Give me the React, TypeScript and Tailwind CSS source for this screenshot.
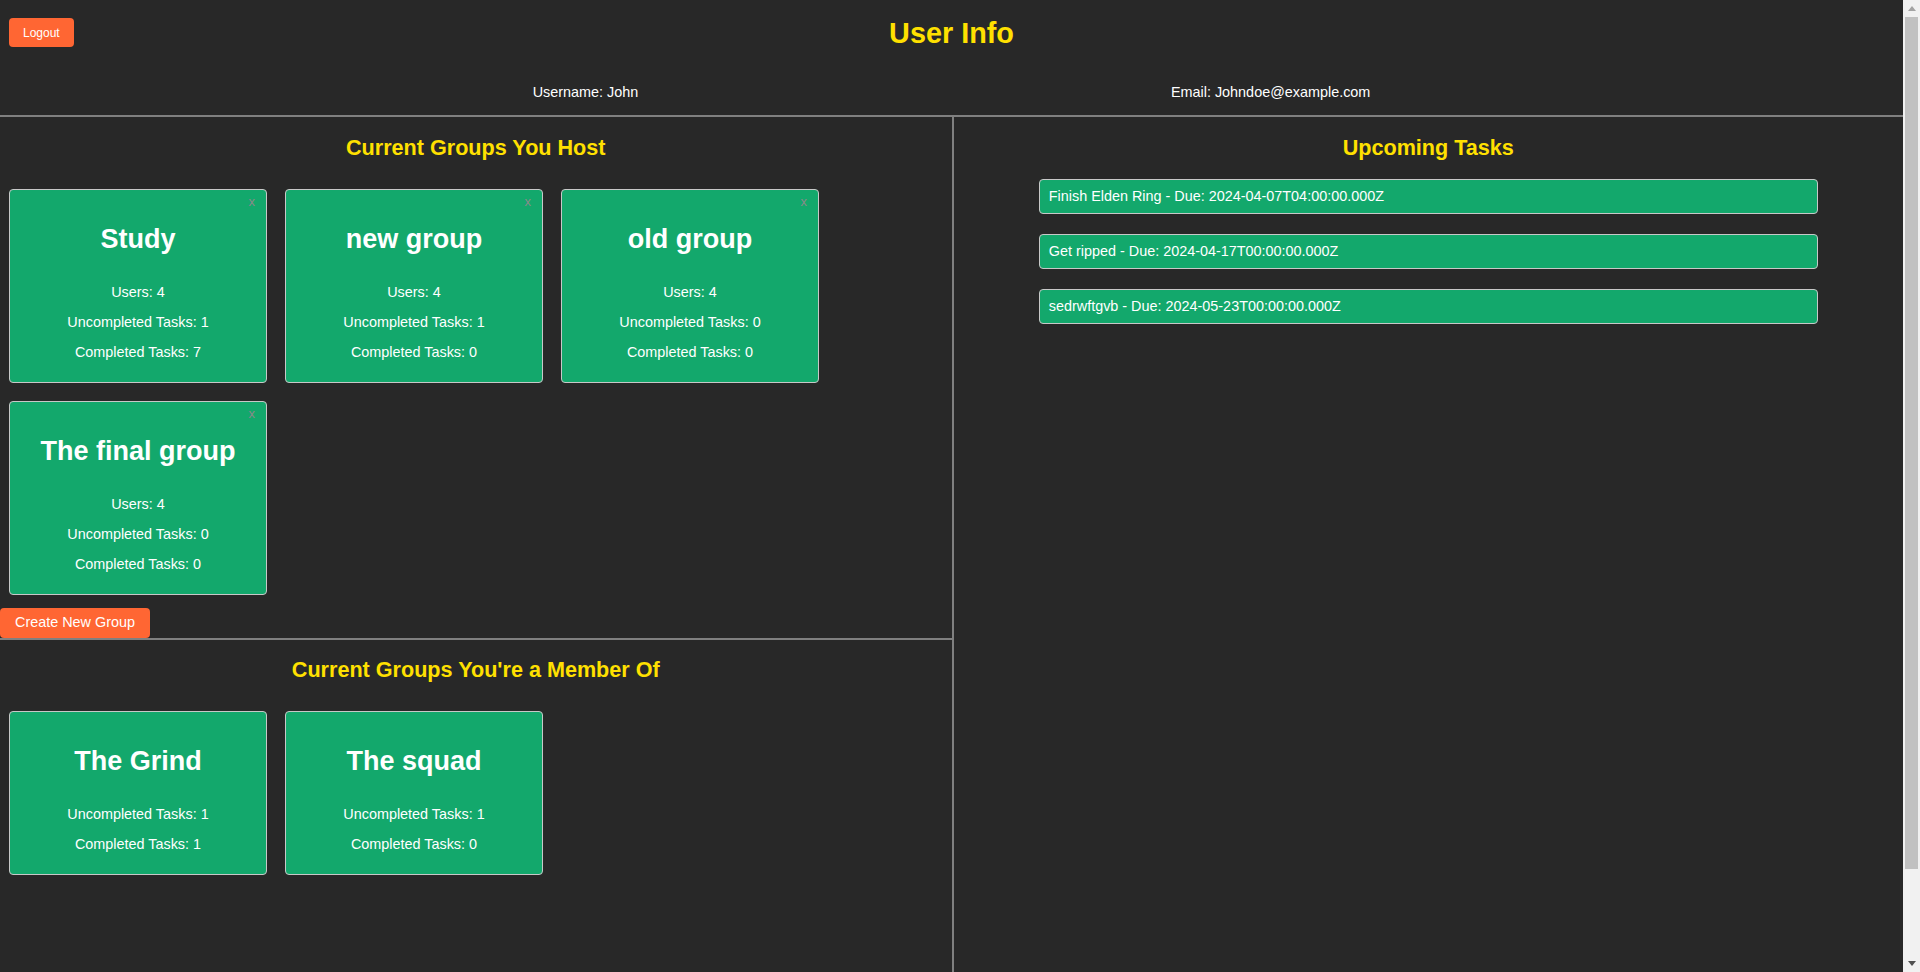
import React from "react";

type HostGroup = {
  name: string;
  users: number;
  uncompleted: number;
  completed: number;
};

const hostGroups: HostGroup[] = [
  { name: "Study", users: 4, uncompleted: 1, completed: 7 },
  { name: "new group", users: 4, uncompleted: 1, completed: 0 },
  { name: "old group", users: 4, uncompleted: 0, completed: 0 },
  { name: "The final group", users: 4, uncompleted: 0, completed: 0 }
];

const memberGroups = [
  { name: "The Grind", uncompleted: 1, completed: 1 },
  { name: "The squad", uncompleted: 1, completed: 0 }
];

const tasks = [
  "Finish Elden Ring - Due: 2024-04-07T04:00:00.000Z",
  "Get ripped - Due: 2024-04-17T00:00:00.000Z",
  "sedrwftgvb - Due: 2024-05-23T00:00:00.000Z"
];

function GroupCard({
  name,
  users,
  uncompleted,
  completed,
  closable
}: {
  name: string;
  users?: number;
  uncompleted: number;
  completed: number;
  closable?: boolean;
}) {
  return (
    <div className="relative m-[9px] w-[258px] rounded-[4px] border border-[#c8c8c8] bg-[#13a86c] pt-[34px] pb-[15px] text-center text-white">
      {closable && (
        <span className="absolute right-[11px] top-[5px] text-[13px] leading-[14px] text-[#8a8a8a]">
          x
        </span>
      )}
      <h2 className="text-[27px] font-bold leading-[31px] mb-[22px]">{name}</h2>
      {users !== undefined && <p className="leading-[30px]">Users: {users}</p>}
      <p className="leading-[30px]">Uncompleted Tasks: {uncompleted}</p>
      <p className="leading-[30px]">Completed Tasks: {completed}</p>
    </div>
  );
}

// window scrollbar as it shows in the screenshot
function Scrollbar() {
  return (
    <div className="flex h-screen w-[17px] shrink-0 flex-col bg-[#f1f1f1]">
      <div className="flex h-[17px] items-center justify-center">
        <svg width="8" height="5" viewBox="0 0 8 5">
          <path d="M4 0 L8 5 L0 5 Z" fill="#a3a3a3" />
        </svg>
      </div>
      <div className="mx-[2px] h-[852px] bg-[#c1c1c1]" />
      <div className="flex-1" />
      <div className="flex h-[17px] items-center justify-center">
        <svg width="8" height="5" viewBox="0 0 8 5">
          <path d="M0 0 L8 0 L4 5 Z" fill="#505050" />
        </svg>
      </div>
    </div>
  );
}

export default function App() {
  return (
    <div className="flex h-screen overflow-hidden bg-[#282828] text-white text-[14.4px] font-['Liberation_Sans',Arial,sans-serif]">
      <div className="min-w-0 flex-1">
        {/* Header */}
        <div className="border-b-2 border-[#808080] pt-[17px] pb-[14px]">
          <div className="grid grid-cols-[1fr_auto_1fr]">
            <div>
              <button className="ml-[9px] mt-[1px] h-[29px] rounded-[4px] bg-[#ff6633] px-[14px] text-[12px] text-white">
                Logout
              </button>
            </div>
            <h1 className="text-[28.8px] font-bold leading-[33px] text-[#ffe000]">User Info</h1>
            <div />
          </div>
          <div className="mt-[34px] flex justify-evenly leading-[17px]">
            <span>Username: John</span>
            <span>Email: Johndoe@example.com</span>
          </div>
        </div>

        {/* Columns */}
        <div className="grid min-h-[953px] grid-cols-2">
          <div>
            <div className="border-b-2 border-[#808080]">
              <h2 className="mt-[18px] mb-[20px] text-center text-[21.6px] font-bold leading-[25px] text-[#ffe000]">
                Current Groups You Host
              </h2>
              <div className="flex flex-wrap">
                {hostGroups.map((g) => (
                  <GroupCard key={g.name} {...g} closable />
                ))}
              </div>
              <button className="mt-[4px] h-[30px] rounded-[4px] bg-[#ff6633] px-[15px] text-[14.4px] text-white">
                Create New Group
              </button>
            </div>

            <div>
              <h2 className="mt-[17px] mb-[20px] text-center text-[21.6px] font-bold leading-[25px] text-[#ffe000]">
                Current Groups You're a Member Of
              </h2>
              <div className="flex flex-wrap">
                {memberGroups.map((g) => (
                  <GroupCard key={g.name} {...g} />
                ))}
              </div>
            </div>
          </div>

          <div className="border-l-2 border-[#808080]">
            <h2 className="mt-[18px] mb-[19px] text-center text-[21.6px] font-bold leading-[25px] text-[#ffe000]">
              Upcoming Tasks
            </h2>
            <div className="flex flex-col gap-[20px]">
              {tasks.map((t) => (
                <div
                  key={t}
                  className="mx-auto flex h-[35px] w-[779px] items-center rounded-[4px] border border-[#c8c8c8] bg-[#13a86c] pl-[9px]"
                >
                  {t}
                </div>
              ))}
            </div>
          </div>
        </div>
      </div>
      <Scrollbar />
    </div>
  );
}
